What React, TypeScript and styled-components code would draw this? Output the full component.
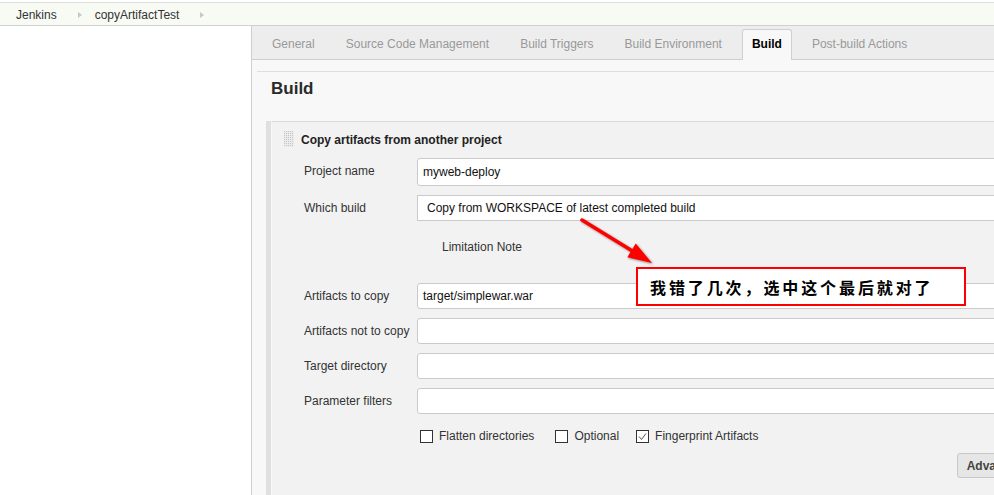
import React from "react";
import styled, { createGlobalStyle } from "styled-components";

const Global = createGlobalStyle`
  * { box-sizing: border-box; }
  html, body { margin: 0; padding: 0; background: #fff; overflow: hidden; }
  body {
    font-family: "Liberation Sans", Arial, sans-serif;
    font-size: 12px;
    color: #333;
  }
`;

const Viewport = styled.div`
  width: 994px;
  height: 495px;
  overflow: hidden;
`;

const Page = styled.div`
  position: relative;
  width: 1060px;
  height: 495px;
  display: flex;
  flex-direction: column;
`;

const Crumbs = styled.div`
  margin-top: 2px;
  height: 24px;
  border-top: 1px solid #dedede;
  border-bottom: 1px solid #d0d0d0;
  background: #f8faf4;
  display: flex;
  align-items: center;
  padding: 1px 0 0 16px;
`;

const Crumb = styled.span`
  color: #333;
  margin-right: 21px;
  line-height: 16px;
`;

const CrumbArrow = styled.span`
  width: 0;
  height: 0;
  border-left: 4px solid #c8c8c8;
  border-top: 3.5px solid transparent;
  border-bottom: 3.5px solid transparent;
  margin-right: 13px;
`;

const Body = styled.div`
  flex: 1;
  display: flex;
  min-height: 0;
`;

const Sidebar = styled.div`
  width: 252px;
  flex: none;
  background: #fff;
  border-right: 1px solid #cfcfcf;
`;

const Main = styled.div`
  flex: 1;
  background: #f8f8f8;
  display: flex;
  flex-direction: column;
  min-width: 0;
`;

const TabBar = styled.div`
  height: 34px;
  padding: 3px 0 0 9px;
  background: #ededed;
  border-bottom: 1px solid #cfcfcf;
  display: flex;
  align-items: stretch;
  gap: 9px;
`;

const Tab = styled.div<{ $active?: boolean }>`
  display: flex;
  align-items: center;
  padding: ${(p) => (p.$active ? "0 9px 2px" : "0 10px 2px")};
  color: ${(p) => (p.$active ? "#000" : "#999")};
  font-weight: ${(p) => (p.$active ? "bold" : "normal")};
  background: ${(p) => (p.$active ? "#f8f8f8" : "transparent")};
  border: ${(p) => (p.$active ? "1px solid #cfcfcf" : "1px solid transparent")};
  border-bottom: none;
  border-radius: 3px 3px 0 0;
  margin-bottom: ${(p) => (p.$active ? "-1px" : "0")};
  position: relative;
`;

const Content = styled.div`
  flex: 1;
  padding-left: 5px;
  display: flex;
  flex-direction: column;
  min-height: 0;
`;

const Divider = styled.div`
  margin-top: 11px;
  height: 1px;
  background: #dfdfdf;
`;

const Heading = styled.h2`
  margin: 7px 0 0 14px;
  font-size: 17px;
  line-height: 20px;
  font-weight: bold;
  color: #2a2a2a;
`;

const Section = styled.div`
  flex: 1;
  margin: 22px 0 0 9px;
  border-left: 5px solid #e0e0e0;
  display: flex;
`;

const SectionInner = styled.div`
  flex: 1;
  background: #f2f2f2;
  border-top: 1px solid #dcdcdc;
  border-left: 1px solid #f7f7f7;
  padding: 9px 16px 0 12px;
`;

const SectionHeader = styled.div`
  display: flex;
  align-items: center;
  gap: 7px;
  height: 16px;
`;

const SectionTitle = styled.span`
  font-weight: bold;
  color: #222;
  padding-top: 1px;
`;

const Form = styled.div`
  margin-top: 11px;
  padding-left: 20px;
  display: grid;
  grid-template-columns: 113px 1fr;
  row-gap: 9px;
`;

const Label = styled.div`
  padding-top: 5px;
  line-height: 16px;
  color: #333;
  white-space: nowrap;
`;

const TextBox = styled.div<{ $h?: number }>`
  height: ${(p) => p.$h ?? 26}px;
  background: #fff;
  border: 1px solid #cacaca;
  border-radius: 3px;
  padding-left: 5px;
  display: flex;
  align-items: center;
  color: #111;
`;

const SelectBox = styled.div`
  height: 26px;
  background: #fff;
  border: 1px solid #cacaca;
  padding-left: 9px;
  display: flex;
  align-items: center;
  color: #111;
`;

const Note = styled.div`
  grid-column: 2;
  height: 44px;
  padding: 9px 0 0 25px;
  line-height: 16px;
  color: #333;
`;

const CheckRow = styled.div`
  grid-column: 2;
  height: 21px;
  padding: 5px 0 0 3px;
  display: flex;
  align-items: center;
`;

const CheckItem = styled.label<{ $gap?: number }>`
  display: flex;
  align-items: center;
  gap: 6px;
  margin-right: ${(p) => p.$gap ?? 20}px;
  color: #333;
  line-height: 14px;
`;

const Box = styled.span`
  width: 13px;
  height: 13px;
  border: 1px solid #333;
  background: #fff;
  display: flex;
  align-items: center;
  justify-content: center;
`;

const ButtonRow = styled.div`
  grid-column: 2;
  display: flex;
  justify-content: flex-end;
`;

const Button = styled.button`
  height: 25px;
  padding: 0 9px;
  background: #e6e6e6;
  border: 1px solid #c8c8c8;
  border-radius: 3px;
  font-family: "Liberation Sans", Arial, sans-serif;
  font-size: 12px;
  font-weight: bold;
  color: #444;
`;

const Callout = styled.div`
  position: absolute;
  left: 636px;
  top: 267px;
  width: 330px;
  height: 39px;
  border: 2px solid #ff0000;
  background: #fff;
  padding-left: 12px;
  display: flex;
  align-items: center;
  font-family: "Noto Sans CJK SC", "Liberation Sans", sans-serif;
  font-size: 16px;
  font-weight: bold;
  letter-spacing: 2.9px;
  color: #000;
`;

const ArrowSvg = styled.svg`
  position: absolute;
  left: 575px;
  top: 212px;
  overflow: visible;
  filter: drop-shadow(1px 1px 1px rgba(90, 0, 0, 0.5));
`;

const Handle = () => {
  const dots = [];
  for (let x = 0; x < 5; x++) {
    for (let y = 0; y < 8; y++) {
      dots.push(<rect key={`${x}-${y}`} x={x * 2} y={y * 2} width={1} height={1} fill="#c4c4c4" />);
    }
  }
  return (
    <svg width="10" height="16" viewBox="0 0 10 16">
      <rect x="0" y="0" width="10" height="16" fill="#ececec" />
      {dots}
    </svg>
  );
};

const Check = ({ checked }: { checked?: boolean }) => (
  <Box>
    {checked && (
      <svg width="9" height="9" viewBox="0 0 9 9">
        <polyline points="1,4.5 3.5,7.5 8,1.5" fill="none" stroke="#555" strokeWidth="1" />
      </svg>
    )}
  </Box>
);

export default function App() {
  return (
    <Viewport>
      <Global />
      <Page>
        <Crumbs>
          <Crumb>Jenkins</Crumb>
          <CrumbArrow />
          <Crumb>copyArtifactTest</Crumb>
          <CrumbArrow />
        </Crumbs>
        <Body>
          <Sidebar />
          <Main>
            <TabBar>
              <Tab>General</Tab>
              <Tab>Source Code Management</Tab>
              <Tab>Build Triggers</Tab>
              <Tab>Build Environment</Tab>
              <Tab $active>Build</Tab>
              <Tab>Post-build Actions</Tab>
            </TabBar>
            <Content>
              <Divider />
              <Heading>Build</Heading>
              <Section>
                <SectionInner>
                  <SectionHeader>
                    <Handle />
                    <SectionTitle>Copy artifacts from another project</SectionTitle>
                  </SectionHeader>
                  <Form>
                    <Label>Project name</Label>
                    <TextBox $h={28}>myweb-deploy</TextBox>
                    <Label>Which build</Label>
                    <SelectBox>Copy from WORKSPACE of latest completed build</SelectBox>
                    <Note>Limitation Note</Note>
                    <Label>Artifacts to copy</Label>
                    <TextBox>target/simplewar.war</TextBox>
                    <Label>Artifacts not to copy</Label>
                    <TextBox />
                    <Label>Target directory</Label>
                    <TextBox />
                    <Label>Parameter filters</Label>
                    <TextBox />
                    <CheckRow>
                      <CheckItem $gap={21}>
                        <Check />
                        Flatten directories
                      </CheckItem>
                      <CheckItem $gap={17}>
                        <Check />
                        Optional
                      </CheckItem>
                      <CheckItem>
                        <Check checked />
                        Fingerprint Artifacts
                      </CheckItem>
                    </CheckRow>
                    <ButtonRow>
                      <Button>Advanced...</Button>
                    </ButtonRow>
                  </Form>
                </SectionInner>
              </Section>
            </Content>
          </Main>
        </Body>
        <ArrowSvg width="85" height="56" viewBox="0 0 85 56">
          <line x1="7" y1="8" x2="57" y2="38.7" stroke="#ff0000" strokeWidth="3.5" strokeLinecap="round" />
          <polygon points="77,51 52.3,45.2 60.7,31.6" fill="#ff0000" />
        </ArrowSvg>
        <Callout>我错了几次，选中这个最后就对了</Callout>
      </Page>
    </Viewport>
  );
}
